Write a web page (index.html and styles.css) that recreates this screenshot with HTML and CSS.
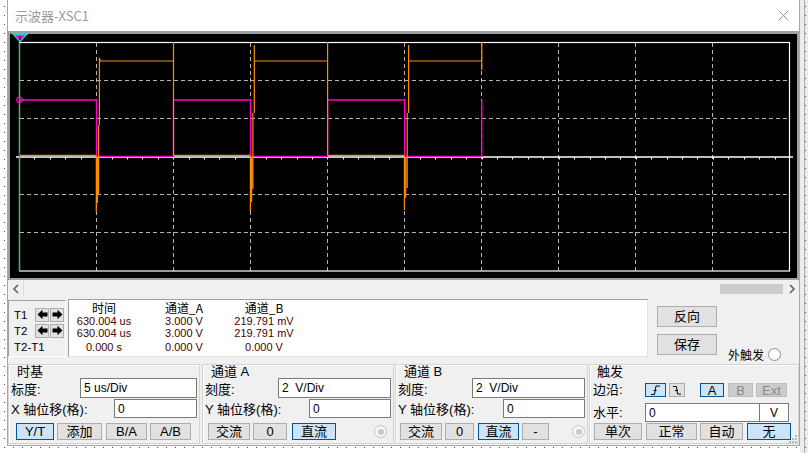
FILE: index.html
```html
<!DOCTYPE html>
<html lang="zh">
<head>
<meta charset="utf-8">
<title>示波器-XSC1</title>
<link rel="stylesheet" href="styles.css">
</head>
<body>
<div class="win">
  <div class="titlebar">
    <span class="title">示波器-XSC1</span>
    <svg class="close" width="11" height="11" viewBox="0 0 11 11"><path d="M0.5,0.5L10.5,10.5M10.5,0.5L0.5,10.5" stroke="#9a9a9a" stroke-width="1" fill="none"/></svg>
  </div>

  <div class="scope">
    <svg class="screen" width="787" height="244" viewBox="0 0 787 244">
      <g transform="translate(-10,-34)">
        <g stroke="#b4b4b4" stroke-width="1" stroke-dasharray="4 3" fill="none">
          <path d="M96.5,43V271M173.5,43V271M250.5,43V271M327.5,43V271M404.5,43V271M481.5,43V271M558.5,43V271M635.5,43V271M712.5,43V271"/>
          <path d="M20,80.5H789M20,118.5H789M20,194.5H789M20,232.5H789"/>
        </g>
        <rect x="19.5" y="42.5" width="770" height="228.5" stroke="#ffffff" stroke-width="1.2" fill="none"/>
        <path d="M16,157H793" stroke="#ffffff" stroke-width="1.3"/>
        <path stroke="#ffffff" stroke-width="1" d="M34.5,157v2.5M50.5,157v2.5M65.5,157v2.5M81.5,157v2.5M96.5,157v2.5M112.5,157v2.5M127.5,157v2.5M142.5,157v2.5M158.5,157v2.5M173.5,157v2.5M189.5,157v2.5M204.5,157v2.5M219.5,157v2.5M235.5,157v2.5M250.5,157v2.5M266.5,157v2.5M281.5,157v2.5M297.5,157v2.5M312.5,157v2.5M327.5,157v2.5M343.5,157v2.5M358.5,157v2.5M374.5,157v2.5M389.5,157v2.5M404.5,157v2.5M420.5,157v2.5M435.5,157v2.5M451.5,157v2.5M466.5,157v2.5M482.5,157v2.5M497.5,157v2.5M512.5,157v2.5M528.5,157v2.5M543.5,157v2.5M559.5,157v2.5M574.5,157v2.5M590.5,157v2.5M605.5,157v2.5M620.5,157v2.5M636.5,157v2.5M651.5,157v2.5M667.5,157v2.5M682.5,157v2.5M697.5,157v2.5M713.5,157v2.5M728.5,157v2.5M744.5,157v2.5M759.5,157v2.5M775.5,157v2.5"/>
        <path stroke="#ff00cc" stroke-width="1.3" fill="none" d="M19,100H96.5V156.3H173.5V100H250.5V156.3H327.6V100H404.6V156.3H481.8V100"/>
        <g stroke="#ff8c00" stroke-width="1.2" fill="none">
          <path d="M19,155.3H96.5M173.5,155.3H250.5M327.6,155.3H404.6"/>
          <path d="M173.5,42V155.3M327.6,42V155.3M481.8,42V70"/>
          <path d="M99.6,61H173.5M254.3,61H327.6M408.6,61H481.8"/>
          <path d="M96.3,156V212M97.4,157V203M98.6,195V125M99.4,125V58L100.4,61"/>
          <path d="M250.4,156V211M251.6,157V202M252.9,189V113M254.3,113V45"/>
          <path d="M404.4,156V210M405.7,157V198M407.2,188V113M408.6,113V45"/>
        </g>
        <path d="M19.5,43V271" stroke="#28d228" stroke-width="1.2"/>
        <path d="M19.5,152V156" stroke="#3050ff" stroke-width="1.2"/>
        <circle cx="19.5" cy="99.8" r="2.8" stroke="#ff00cc" stroke-width="1.1" fill="none"/>
        <polygon points="12,34 28,34 20,42.5" fill="#00e0e8"/>
        <polygon points="15,35.6 25,35.6 20,41" fill="#ff00cc"/>
        <rect x="19.3" y="36" width="1.2" height="3.6" fill="#000"/>
      </g>
    </svg>
  </div>

  <div class="hscroll">
    <div class="sarrow left"><svg width="8" height="10" viewBox="0 0 8 10"><path d="M6,1L2,5L6,9" stroke="#606060" stroke-width="1.6" fill="none"/></svg></div>
    <div class="strack"></div>
    <div class="sthumb"></div>
    <div class="sarrow right"><svg width="8" height="10" viewBox="0 0 8 10"><path d="M2,1L6,5L2,9" stroke="#606060" stroke-width="1.6" fill="none"/></svg></div>
  </div>

  <div class="panel">
    <div class="row1">
      <div class="cursors">
        <div class="crow">
          <span class="clabel">T1</span>
          <span class="abtn"><svg width="11" height="11" viewBox="0 0 11 11"><path d="M0.5,5.5L5.5,0.8V3.6H10.5V7.4H5.5V10.2Z" fill="#000"/></svg></span>
          <span class="abtn"><svg width="11" height="11" viewBox="0 0 11 11"><path d="M10.5,5.5L5.5,0.8V3.6H0.5V7.4H5.5V10.2Z" fill="#000"/></svg></span>
        </div>
        <div class="crow">
          <span class="clabel">T2</span>
          <span class="abtn"><svg width="11" height="11" viewBox="0 0 11 11"><path d="M0.5,5.5L5.5,0.8V3.6H10.5V7.4H5.5V10.2Z" fill="#000"/></svg></span>
          <span class="abtn"><svg width="11" height="11" viewBox="0 0 11 11"><path d="M10.5,5.5L5.5,0.8V3.6H0.5V7.4H5.5V10.2Z" fill="#000"/></svg></span>
        </div>
        <div class="crow last"><span class="clabel wide">T2-T1</span></div>
      </div>

      <div class="readout">
        <span class="hd">时间</span><span class="hd">通道_A</span><span class="hd">通道_B</span>
        <span class="v">630.004 us</span><span class="v">3.000 V</span><span class="v">219.791 mV</span>
        <span class="v">630.004 us</span><span class="v">3.000 V</span><span class="v">219.791 mV</span>
        <span class="v lastv">0.000 s</span><span class="v lastv">0.000 V</span><span class="v lastv">0.000 V</span>
      </div>

      <div class="side">
        <span class="btn big">反向</span>
        <span class="btn big">保存</span>
      </div>

      <div class="ext">
        <span>外触发</span>
        <span class="radio plain"></span>
      </div>
    </div>

    <div class="groups">
      <div class="grp g1">
        <div class="gtitle">时基</div>
        <div class="grow r1"><span class="lbl">标度:</span><span class="inp w117">5 us/Div</span></div>
        <div class="grow r2"><span class="lbl">X 轴位移(格):</span><span class="inp w83">0</span></div>
        <div class="brow">
          <span class="btn sel" style="margin-left:5px;width:38px">Y/T</span>
          <span class="btn" style="margin-left:3px;width:45px">添加</span>
          <span class="btn" style="margin-left:4px;width:41px">B/A</span>
          <span class="btn" style="margin-left:3px;width:41px">A/B</span>
        </div>
      </div>

      <div class="grp g2">
        <div class="gtitle">通道 A</div>
        <div class="grow r1"><span class="lbl">刻度:</span><span class="inp w113 pre">2  V/Div</span></div>
        <div class="grow r2"><span class="lbl">Y 轴位移(格):</span><span class="inp w82">0</span></div>
        <div class="brow">
          <span class="btn" style="margin-left:3px;width:42px">交流</span>
          <span class="btn" style="margin-left:3px;width:34px">0</span>
          <span class="btn sel" style="margin-left:5px;width:44px">直流</span>
          <span class="radio dim" style="margin-left:38px"><span class="dot"></span></span>
        </div>
      </div>

      <div class="grp g3">
        <div class="gtitle">通道 B</div>
        <div class="grow r1"><span class="lbl">刻度:</span><span class="inp w113 pre">2  V/Div</span></div>
        <div class="grow r2"><span class="lbl">Y 轴位移(格):</span><span class="inp w82">0</span></div>
        <div class="brow">
          <span class="btn" style="margin-left:2px;width:42px">交流</span>
          <span class="btn" style="margin-left:3px;width:29px">0</span>
          <span class="btn sel" style="margin-left:4px;width:41px">直流</span>
          <span class="btn" style="margin-left:3px;width:27px">-</span>
          <span class="radio dim" style="margin-left:23px"><span class="dot"></span></span>
        </div>
      </div>

      <div class="grp g4">
        <div class="gtitle">触发</div>
        <div class="trow t1">
          <span class="tlbl">边沿:</span>
          <span class="btn sm sel" style="width:21px"><svg width="11" height="10" viewBox="0 0 11 10"><path d="M1,9.5H4.5L6,1H10M3.5,5.5H6.5" stroke="#000" stroke-width="1" fill="none"/></svg></span>
          <span class="btn sm" style="margin-left:3px;width:16px"><svg width="10" height="10" viewBox="0 0 10 10"><path d="M1,1.5H4.5L5.5,9H9M3,5.5H6" stroke="#000" stroke-width="1" fill="none"/></svg></span>
          <span class="btn sm sel" style="margin-left:15px;width:24px">A</span>
          <span class="btn sm dis" style="margin-left:4px;width:25px">B</span>
          <span class="btn sm dis" style="margin-left:3px;width:31px">Ext</span>
        </div>
        <div class="trow t2">
          <span class="tlbl">水平:</span>
          <span class="inp w115">0</span>
          <span class="inp unit">V</span>
        </div>
        <div class="brow b4">
          <span class="btn" style="margin-left:2px;width:48px">单次</span>
          <span class="btn" style="margin-left:4px;width:51px">正常</span>
          <span class="btn" style="margin-left:3px;width:43px">自动</span>
          <span class="btn sel" style="margin-left:4px;width:44px">无</span>
        </div>
      </div>
    </div>
  </div>

  <svg class="grip" width="9" height="9" viewBox="0 0 9 9">
    <g fill="#b8b8b8"><rect x="6" y="0" width="2" height="2"/><rect x="3" y="3" width="2" height="2"/><rect x="6" y="3" width="2" height="2"/><rect x="0" y="6" width="2" height="2"/><rect x="3" y="6" width="2" height="2"/><rect x="6" y="6" width="2" height="2"/></g>
  </svg>
</div>
</body>
</html>
```
FILE: styles.css
```css
* { box-sizing: border-box; }
html, body { margin: 0; padding: 0; }
body {
  width: 808px;
  height: 453px;
  overflow: hidden;
  background-color: #ffffff;
  background-image:
    radial-gradient(circle, #4a4a4a 0.7px, transparent 1px),
    linear-gradient(to right, transparent 800px, #ececec 800px, #ececec 804px, #b0b0b0 804px, #b0b0b0 805px, #ececec 805px);
  background-size: 9px 9px, 808px 453px;
  background-position: 0 2px, 0 0;
  background-repeat: repeat, no-repeat;
  font-family: "Liberation Sans", "Noto Sans CJK SC", sans-serif;
  font-size: 12px;
  color: #000;
}
.win {
  position: relative;
  margin-left: 7px;
  width: 793px;
  height: 446px;
  border-left: 1px solid #a8a8a8;
  border-right: 1px solid #a8a8a8;
  border-bottom: 1px solid #a8a8a8;
  background: #f0f0f0;
  display: flex;
  flex-direction: column;
}
.titlebar {
  height: 31px;
  background: #ffffff;
  display: flex;
  align-items: center;
  justify-content: space-between;
  padding: 0 10px 0 7px;
}
.title {
  font-family: "Noto Sans CJK SC", sans-serif;
  font-size: 13px;
  color: #9a9a9a;
}
.close { display: block; }
.scope {
  height: 249px;
  border: 2px solid #a0a0a0;
  border-top-width: 3px;
  background: #000;
}
.screen { display: block; }
.hscroll {
  height: 17px;
  display: flex;
  align-items: center;
}
.sarrow {
  height: 17px;
  display: flex;
  align-items: center;
  justify-content: center;
}
.sarrow.left { width: 16px; border-right: 1px solid #dedede; }
.sarrow.right { width: 14px; margin-left: 2px; }
.strack { flex: 1; }
.sthumb { width: 63px; height: 10px; background: #cdcdcd; }
.panel {
  flex: 1;
  padding-top: 2px;
  display: flex;
  flex-direction: column;
}
.row1 {
  height: 58px;
  display: flex;
  align-items: flex-start;
}
.cursors {
  width: 58px;
  height: 57px;
  margin-top: 1px;
  border: 1px solid;
  border-color: #a0a0a0 #ffffff #ffffff #a0a0a0;
  padding: 6px 0 0 5px;
}
.crow {
  height: 15px;
  margin-bottom: 1px;
  display: flex;
  align-items: center;
}
.crow.last { margin-top: 2px; height: 14px; }
.clabel { width: 21px; font-size: 11.5px; white-space: nowrap; }
.clabel.wide { width: auto; }
.abtn {
  width: 14px;
  height: 14px;
  margin-right: 1px;
  border: 1px solid #adadad;
  background: #e1e1e1;
  display: flex;
  align-items: center;
  justify-content: center;
}
.readout {
  width: 580px;
  height: 58px;
  margin-left: 2px;
  background: #ffffff;
  border: 1px solid;
  border-color: #a0a0a0 #e3e3e3 #e3e3e3 #a0a0a0;
  padding-top: 1px;
  display: grid;
  grid-template-columns: 70px 90px 70px;
  grid-template-rows: 14px 12px 12px 14px;
  align-content: start;
}
.hd {
  text-align: center;
  font-family: "Noto Sans CJK SC", sans-serif;
  font-size: 12px;
  line-height: 14px;
}
.v {
  text-align: center;
  font-size: 11px;
  line-height: 12px;
  color: #4a0000;
  white-space: nowrap;
}
.v.lastv { margin-top: 1px; line-height: 14px; }
.side {
  margin-left: 9px;
  margin-top: 7px;
  display: flex;
  flex-direction: column;
  gap: 7px;
}
.btn {
  height: 17px;
  border: 1px solid #adadad;
  background: #e1e1e1;
  display: flex;
  align-items: center;
  justify-content: center;
  font-size: 13px;
  line-height: 1;
  white-space: nowrap;
}
.btn.big { width: 60px; height: 21px; }
.btn.sm { height: 14px; font-size: 13px; }
.btn.sel { background: #cce4f7; border-color: #005499; }
.btn.dis { background: #cccccc; border-color: #bfbfbf; color: #8a8a8a; }
.ext {
  margin-left: 11px;
  margin-top: 47px;
  height: 16px;
  display: flex;
  align-items: center;
  font-size: 12px;
}
.radio {
  width: 13px;
  height: 13px;
  border-radius: 50%;
  display: flex;
  align-items: center;
  justify-content: center;
  flex: none;
}
.radio.plain { margin-left: 4px; border: 1px solid #8c8c8c; background: #ffffff; }
.radio.dim { border: 1px solid #c2c2c2; background: #f7f7f7; }
.radio .dot { width: 6px; height: 6px; border-radius: 50%; background: #c8c8c8; }
.groups {
  margin-top: 7px;
  height: 80px;
  display: flex;
}
.grp {
  height: 80px;
  border: 1px solid #d4d4d4;
  box-shadow: inset 1px 1px 0 #ffffff;
  padding: 0 2px;
  display: flex;
  flex-direction: column;
  font-size: 13px;
}
.g1 { width: 192px; margin-right: 2px; }
.g2 { width: 192px; margin-right: 1px; }
.g3 { width: 193px; margin-right: 1px; }
.g4 { width: 210px; }
.gtitle {
  height: 13px;
  line-height: 13px;
  padding-left: 6px;
  font-size: 13px;
}
.g4 .gtitle { padding-left: 5px; }
.grow {
  display: flex;
  align-items: center;
  justify-content: space-between;
}
.grow.r1 { height: 20px; }
.grow.r2 { height: 19px; margin-top: 1px; }
.lbl { white-space: nowrap; }
.inp {
  height: 100%;
  background: #ffffff;
  border: 1px solid #7a7a7a;
  padding-left: 3px;
  display: flex;
  align-items: center;
  font-size: 12px;
  white-space: nowrap;
}
.inp.pre { white-space: pre; }
.w117 { width: 117px; }
.w113 { width: 113px; }
.w115 { width: 115px; }
.w83 { width: 83px; }
.w82 { width: 82px; }
.brow {
  height: 17px;
  margin-top: 5px;
  display: flex;
  align-items: center;
}
.brow.b4 { margin-top: 1px; }
.trow { display: flex; }
.trow.t1 { height: 20px; align-items: flex-end; padding-bottom: 1px; }
.trow.t2 { height: 19px; margin-top: 5px; align-items: stretch; }
.tlbl { width: 52px; margin-left: 1px; line-height: 14px; white-space: nowrap; }
.trow.t2 .tlbl { align-self: center; }
.inp.unit { width: 30px; margin-left: -1px; padding-left: 0; justify-content: center; }
.grip { position: absolute; right: 1px; bottom: 1px; }
```
